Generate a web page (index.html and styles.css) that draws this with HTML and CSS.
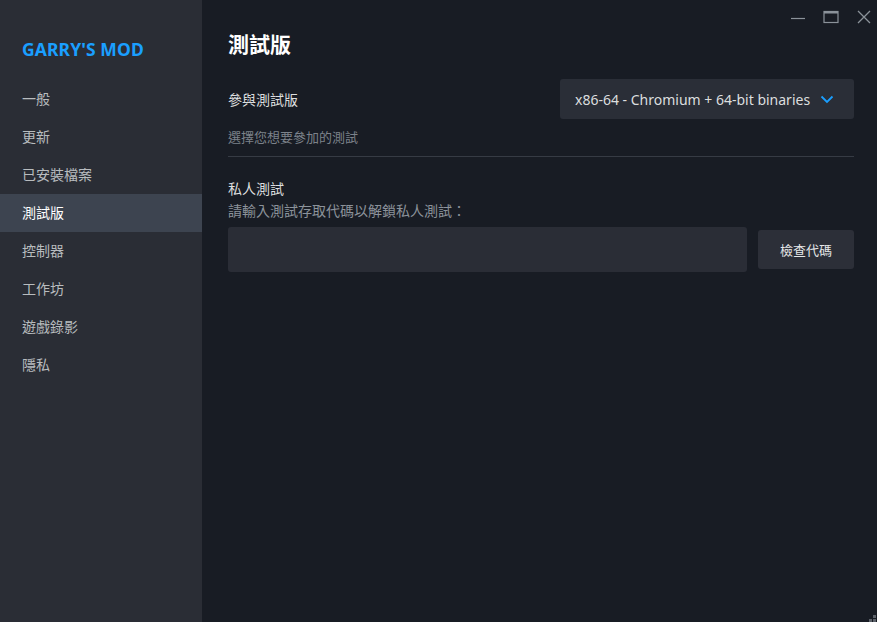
FILE: index.html
```html
<!DOCTYPE html>
<html lang="zh-Hant">
<head>
  <meta charset="UTF-8">
  <meta name="viewport" content="width=device-width, initial-scale=1.0">
  <title>GARRY'S MOD - 內容</title>
  <link rel="stylesheet" href="styles.css">
</head>
<body>
  <div class="window">
    <div class="sidebar">
      <div class="game-title">GARRY'S MOD</div>
      <ul class="nav">
        <li class="nav-item">一般</li>
        <li class="nav-item">更新</li>
        <li class="nav-item">已安裝檔案</li>
        <li class="nav-item active">測試版</li>
        <li class="nav-item">控制器</li>
        <li class="nav-item">工作坊</li>
        <li class="nav-item">遊戲錄影</li>
        <li class="nav-item">隱私</li>
      </ul>
    </div>

    <div class="main">
      <div class="titlebar">
        <span class="win-btn">
          <svg width="14" height="14" viewBox="0 0 14 14"><path d="M0 8.5h14" stroke="#8b929a" stroke-width="1.2"/></svg>
        </span>
        <span class="win-btn">
          <svg width="16" height="14" viewBox="0 0 16 14"><rect x="1" y="1.5" width="14" height="11" fill="none" stroke="#8b929a" stroke-width="1.2"/><path d="M1 2.5h14" stroke="#8b929a" stroke-width="2"/></svg>
        </span>
        <span class="win-btn">
          <svg width="14" height="14" viewBox="0 0 14 14"><path d="M1 1L13 13M13 1L1 13" stroke="#8b929a" stroke-width="1.3"/></svg>
        </span>
      </div>

      <div class="content">
        <h1 class="page-title">測試版</h1>

        <div class="beta-row">
          <div class="label">參與測試版</div>
          <div class="dropdown">
            <span>x86-64 - Chromium + 64-bit binaries</span>
            <svg width="14" height="10" viewBox="0 0 14 10"><path d="M1.5 2.5L7 8L12.5 2.5" fill="none" stroke="#1a9fff" stroke-width="1.8"/></svg>
          </div>
        </div>
        <div class="hint">選擇您想要參加的測試</div>
        <div class="divider"></div>

        <div class="label">私人測試</div>
        <div class="sub">請輸入測試存取代碼以解鎖私人測試：</div>
        <div class="code-row">
          <input class="code-input" type="text">
          <button class="button">檢查代碼</button>
        </div>
      </div>

      <div class="grip">
        <svg width="12" height="12" viewBox="0 0 12 12" fill="#5c6169"><rect x="9" y="0" width="3" height="3"/><rect x="5" y="4" width="3" height="3"/><rect x="9" y="4" width="3" height="3"/><rect x="1" y="8" width="3" height="3"/><rect x="5" y="8" width="3" height="3"/><rect x="9" y="8" width="3" height="3"/></svg>
      </div>
    </div>
  </div>
</body>
</html>
```

FILE: styles.css
```css
body {
  margin: 0;
  padding: 0;
  font-family: 'Noto Sans', 'Noto Sans CJK TC', sans-serif;
  background-color: #181c24;
  color: #dcdedf;
  overflow: hidden;
}

.window {
  display: flex;
  width: 877px;
  height: 622px;
}

.sidebar {
  width: 202px;
  flex-shrink: 0;
  background-color: #2a2d35;
}

.game-title {
  color: #1a9fff;
  font-family: 'Noto Sans', sans-serif;
  font-weight: 700;
  font-size: 17.5px;
  padding: 37px 0 0 22px;
  height: 43px;
  letter-spacing: 0.1px;
}

.nav {
  list-style: none;
  margin: 0;
  padding: 0;
}

.nav-item {
  height: 38px;
  line-height: 38px;
  padding-left: 22px;
  font-size: 14px;
  color: #b8bcbf;
}

.nav-item.active {
  background-color: #3d4450;
  color: #ffffff;
}

.main {
  flex: 1;
  position: relative;
  background-color: #181c24;
}

.titlebar {
  display: flex;
  justify-content: flex-end;
  gap: 18px;
  padding: 7px 6px 0 0;
  height: 20px;
}

.win-btn {
  display: flex;
  align-items: center;
}

.content {
  padding: 0 23px 0 26px;
}

.page-title {
  margin: 1px 0 0;
  font-size: 21px;
  font-weight: 700;
  color: #ffffff;
  height: 32px;
  line-height: 32px;
}

.beta-row {
  display: flex;
  justify-content: space-between;
  align-items: center;
  margin-top: 19px;
}

.label {
  font-size: 14px;
  color: #dcdedf;
}

.dropdown {
  display: flex;
  align-items: center;
  gap: 10px;
  height: 40px;
  padding: 0 18px 0 15px;
  width: 261px;
  background-color: #2a2e37;
  border-radius: 3px;
  font-size: 14px;
  color: #dcdedf;
}

.hint {
  margin-top: 8px;
  font-size: 13px;
  color: #7c828a;
}

.divider {
  height: 1px;
  background-color: #363b44;
  margin: 10px 0 21px;
}

.sub {
  font-size: 14px;
  color: #8b929a;
  margin-top: 2px;
}

.code-row {
  display: flex;
  align-items: center;
  gap: 11px;
  margin-top: 7px;
}

.code-input {
  flex: 1;
  height: 45px;
  box-sizing: border-box;
  border: none;
  border-radius: 3px;
  background-color: #2a2d36;
  outline: none;
  color: #dcdedf;
}

.button {
  width: 96px;
  height: 39px;
  border: none;
  border-radius: 3px;
  background-color: #2c2f38;
  color: #e6e8e9;
  font-family: 'Noto Sans CJK TC', sans-serif;
  font-size: 13px;
}

.grip {
  position: absolute;
  right: 1px;
  bottom: 0;
  height: 12px;
}
```
